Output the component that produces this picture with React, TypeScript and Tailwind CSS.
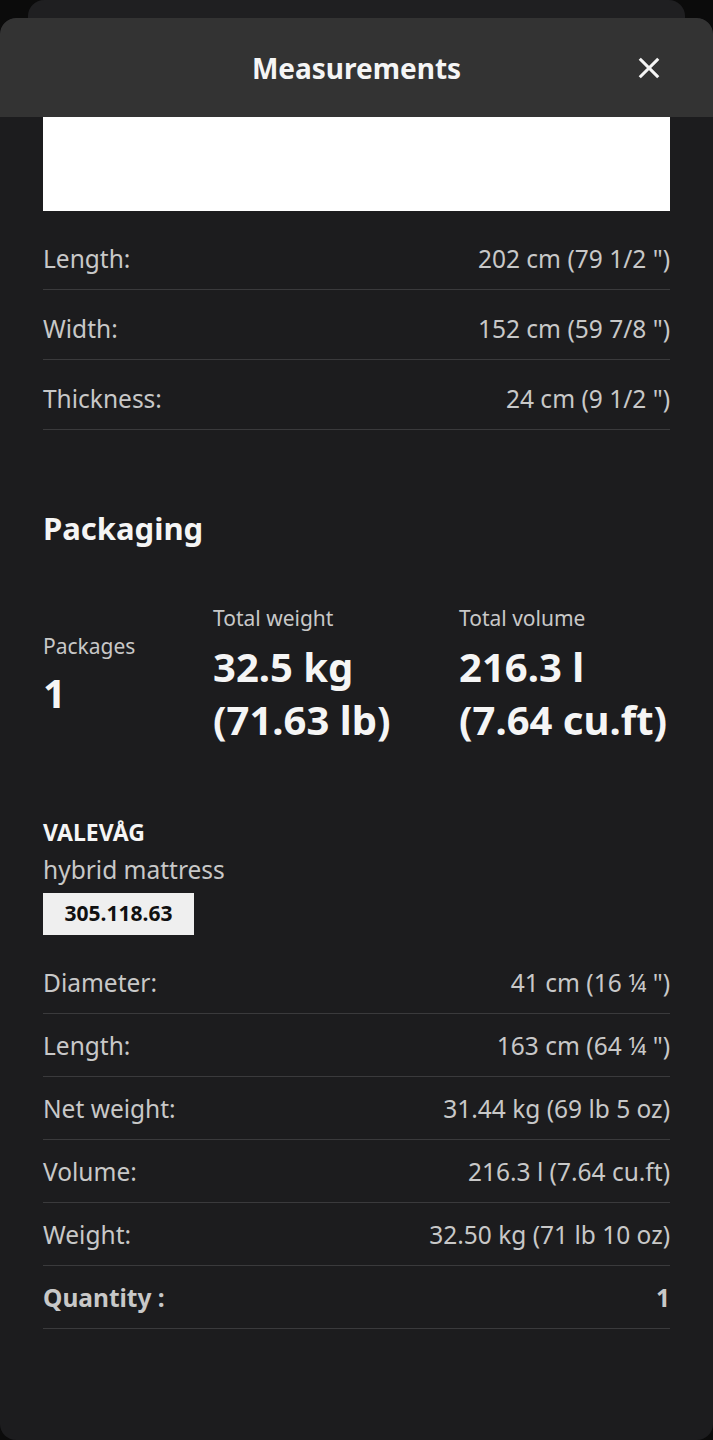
import React from 'react'

const font = { fontFamily: '"Noto Sans", "Open Sans", sans-serif' }

const dims = [
  { label: 'Length:', value: '202 cm (79 1/2 ")' },
  { label: 'Width:', value: '152 cm (59 7/8 ")' },
  { label: 'Thickness:', value: '24 cm (9 1/2 ")' },
]

const pkg = [
  { label: 'Diameter:', value: '41 cm (16 ¼ ")' },
  { label: 'Length:', value: '163 cm (64 ¼ ")' },
  { label: 'Net weight:', value: '31.44 kg (69 lb 5 oz)' },
  { label: 'Volume:', value: '216.3 l (7.64 cu.ft)' },
  { label: 'Weight:', value: '32.50 kg (71 lb 10 oz)' },
]

export default function App() {
  return (
    <div className="min-h-[1440px] w-[713px] bg-[#0b0b0b]" style={font}>
      {/* card behind the sheet */}
      <div className="h-[18px] px-[28px]">
        <div className="h-full rounded-t-[16px] bg-[#1f1f21]" />
      </div>

      {/* sheet */}
      <div className="flex h-[1422px] flex-col overflow-hidden rounded-[16px] bg-[#1c1c1e]">
        {/* header */}
        <div className="relative flex h-[99px] shrink-0 items-center justify-center rounded-t-[16px] bg-[#333333]">
          <h1 className="text-[28px] font-bold leading-none text-[#f5f5f5]">Measurements</h1>
          <button className="absolute right-[50px] top-[36px] text-[#f5f5f5]">
            <svg width="28" height="28" viewBox="0 0 24 24" fill="none" stroke="currentColor" strokeWidth="2.6" strokeLinecap="square">
              <path d="M5 5l14 14M19 5L5 19" />
            </svg>
          </button>
        </div>

        <div className="px-[43px]">
          {/* image area (cut off by scroll) */}
          <div className="h-[94px] bg-white" />

          {/* product dimensions */}
          <div className="mt-[9px]">
            {dims.map((d) => (
              <div key={d.label} className="flex justify-between border-b border-[#3a3a3c] pb-[13px] pt-[22px] text-[24.5px] leading-[34px] text-[#c8c8c8]">
                <span>{d.label}</span>
                <span>{d.value}</span>
              </div>
            ))}
          </div>

          {/* Packaging */}
          <h2 className="mt-[78px] text-[31px] font-bold leading-[40px] text-[#f5f5f5]">Packaging</h2>

          <div className="mt-[56px] flex items-center">
            <div className="w-[170px]">
              <p className="text-[21px] leading-[28px] text-[#c8c8c8]">Packages</p>
              <p className="mt-[6px] text-[40px] font-bold leading-[53px] text-[#f5f5f5]">1</p>
            </div>
            <div className="w-[246px]">
              <p className="text-[21px] leading-[28px] text-[#c8c8c8]">Total weight</p>
              <p className="mt-[8px] text-[40px] font-bold leading-[53px] text-[#f5f5f5]">
                32.5 kg
                <br />
                (71.63 lb)
              </p>
            </div>
            <div>
              <p className="text-[21px] leading-[28px] text-[#c8c8c8]">Total volume</p>
              <p className="mt-[8px] text-[40px] font-bold leading-[53px] text-[#f5f5f5]">
                216.3 l
                <br />
                (7.64 cu.ft)
              </p>
            </div>
          </div>

          {/* product */}
          <p className="mt-[71px] text-[23px] font-bold leading-[30px] text-[#f5f5f5]">VALEVÅG</p>
          <p className="mt-[6px] text-[24.5px] leading-[34px] text-[#c8c8c8]">hybrid mattress</p>
          <div className="mt-[6px] flex h-[42px] w-[151px] items-center justify-center bg-[#efefef] text-[21px] font-bold text-[#111111]">
            305.118.63
          </div>

          <div className="mt-[16px]">
            {pkg.map((d) => (
              <div key={d.label} className="flex justify-between border-b border-[#3a3a3c] pb-[13px] pt-[15px] text-[24.5px] leading-[34px] text-[#c8c8c8]">
                <span>{d.label}</span>
                <span>{d.value}</span>
              </div>
            ))}
            <div className="flex justify-between border-b border-[#3a3a3c] pb-[13px] pt-[15px] text-[24.5px] font-bold leading-[34px] text-[#c8c8c8]">
              <span>Quantity :</span>
              <span>1</span>
            </div>
          </div>
        </div>
      </div>
    </div>
  )
}
